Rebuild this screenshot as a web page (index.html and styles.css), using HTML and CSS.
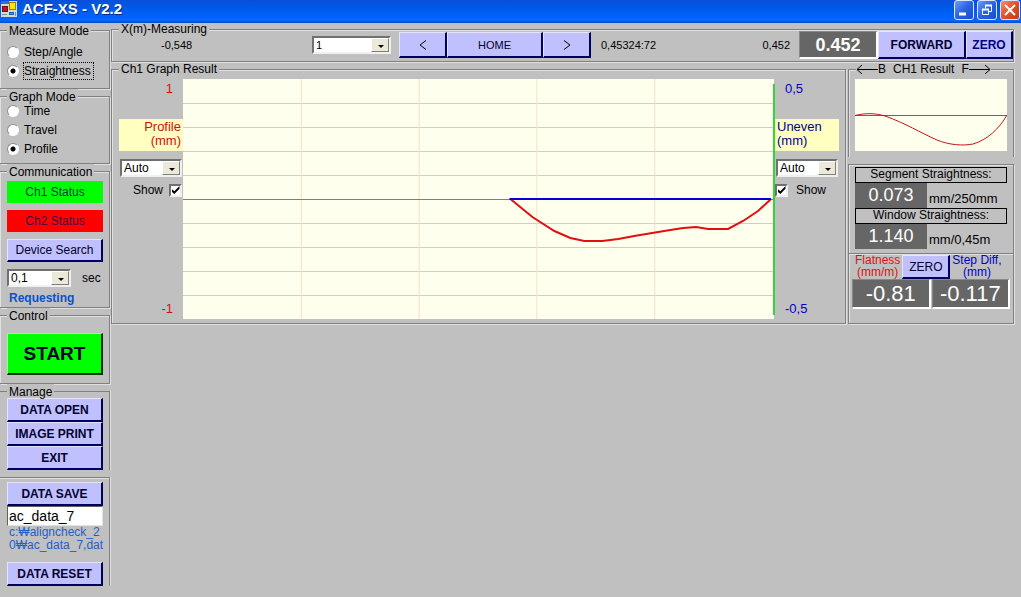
FILE: index.html
```html
<!DOCTYPE html>
<html lang="en">
<head>
<meta charset="utf-8">
<title>ACF-XS - V2.2</title>
<link rel="stylesheet" href="styles.css">
</head>
<body>
<header class="titlebar">
  <svg class="app-icon" width="16" height="16" viewBox="0 0 16 16" aria-hidden="true">
    <rect width="16" height="16" fill="#d8d8d0"/>
    <rect width="8" height="3" fill="#3a6ad0"/>
    <rect x="1.500" y="5.500" width="5" height="5" fill="#c01030" stroke="#701010"/>
    <rect x="8.500" y="1.500" width="6" height="7" fill="#ffe400" stroke="#a08000"/>
    <rect x="8.500" y="11.500" width="4" height="2" fill="#3aa0e8" stroke="#1060b0"/>
    <path d="M1 13.500h5M14.500 11v4" stroke="#8090a0"/>
  </svg>
  <h1 class="title">ACF-XS - V2.2</h1>
  <div class="window-buttons">
    <button class="win" aria-label="Minimize"><svg width="18" height="18" viewBox="0 0 18 18"><path d="M4 13h7" stroke="#fff" stroke-width="3"/></svg></button>
    <button class="win" aria-label="Restore"><svg width="18" height="18" viewBox="0 0 18 18" fill="none" stroke="#fff"><path d="M7.500 7V4.500h6v6H11"/><path d="M7 4.500h7" stroke-width="2"/><path d="M4.500 8.500h6v5h-6z"/><path d="M4 8.500h7" stroke-width="2"/></svg></button>
    <button class="win close" aria-label="Close"><svg width="18" height="18" viewBox="0 0 18 18"><path d="M4 4l10 10M14 4L4 14" stroke="#fff" stroke-width="2"/></svg></button>
  </div>
</header>
<div class="app">
  <aside class="sidebar">
    <fieldset class="group measure">
      <legend>Measure Mode</legend>
      <label class="option"><input type="radio" name="measure"><span>Step/Angle</span></label>
      <label class="option"><input type="radio" name="measure" checked><span class="focused">Straightness</span></label>
    </fieldset>
    <fieldset class="group graph-mode">
      <legend>Graph Mode</legend>
      <label class="option"><input type="radio" name="graph"><span>Time</span></label>
      <label class="option"><input type="radio" name="graph"><span>Travel</span></label>
      <label class="option"><input type="radio" name="graph" checked><span>Profile</span></label>
    </fieldset>
    <fieldset class="group comm">
      <legend>Communication</legend>
      <button class="status ok">Ch1 Status</button>
      <button class="status bad">Ch2 Status</button>
      <button class="btn">Device Search</button>
      <div class="interval">
        <span class="combo"><select id="interval"><option>0,1</option></select></span>
        <label for="interval">sec</label>
      </div>
      <p class="requesting">Requesting</p>
    </fieldset>
    <fieldset class="group control">
      <legend>Control</legend>
      <button class="btn start">START</button>
    </fieldset>
    <fieldset class="group manage">
      <legend>Manage</legend>
      <button class="btn bold">DATA OPEN</button>
      <button class="btn bold">IMAGE PRINT</button>
      <button class="btn bold">EXIT</button>
    </fieldset>
    <section class="group files">
      <button class="btn bold">DATA SAVE</button>
      <input class="filename" type="text" value="ac_data_7" aria-label="File name">
      <p class="path">c:₩aligncheck_2<br>0₩ac_data_7,dat</p>
      <button class="btn bold">DATA RESET</button>
    </section>
  </aside>
  <main class="main">
    <fieldset class="group measuring">
      <legend>X(m)-Measuring</legend>
      <div class="toolbar">
        <output class="offset">-0,548</output>
        <span class="combo step"><select aria-label="Axis"><option>1</option></select></span>
        <div class="nav">
          <button class="btn" aria-label="Previous"><svg width="8" height="10" viewBox="0 0 8 10"><path d="M7 0.500L1 5l6 4.500" fill="none" stroke="#000"/></svg></button>
          <button class="btn">HOME</button>
          <button class="btn" aria-label="Next"><svg width="8" height="10" viewBox="0 0 8 10"><path d="M1 0.500L7 5l-6 4.500" fill="none" stroke="#000"/></svg></button>
        </div>
        <output class="clock">0,45324:72</output>
        <output class="current">0,452</output>
        <output class="display bold raised position">0.452</output>
        <button class="btn bold forward">FORWARD</button>
        <button class="btn bold zero-top">ZERO</button>
      </div>
    </fieldset>
    <div class="panels">
      <fieldset class="group chart">
        <legend>Ch1 Graph Result</legend>
        <div class="chart-row">
          <div class="axis left">
            <span class="limit">1</span>
            <div class="unit">Profile<br>(mm)</div>
            <span class="combo"><select aria-label="Profile scale"><option>Auto</option></select></span>
            <label class="show">Show <input type="checkbox" checked></label>
            <span class="limit low">-1</span>
          </div>
          <svg class="plot" viewBox="0 0 593 240" preserveAspectRatio="none" role="img" aria-label="Profile and uneven graph">
            <rect width="592" height="240" fill="#ffffee"/>
            <path d="M0 24.500H592M0 48.500H592M0 72.500H592M0 96.500H592M0 144.500H592M0 168.500H592M0 192.500H592M0 216.500H592" stroke="#cfcfc4"/>
            <path d="M118.500 0V240M236.500 0V240M354.500 0V240M472.500 0V240" stroke="#f5dfc8"/>
            <path d="M0 120.500H592" stroke="#808078"/>
            <path d="M328 120L350 138L372 152L388 159L402 162L420 162L436 160L452 157L470 154L488 151L501 149L514 148L526 150L546 150L561 142L576 132L589 120" fill="none" stroke="#e01010" stroke-width="2"/>
            <path d="M327 120H589" stroke="#0000d8" stroke-width="2"/>
            <path d="M592 5V236" stroke="#30d830" stroke-width="2"/>
          </svg>
          <div class="axis right">
            <span class="limit">0,5</span>
            <div class="unit">Uneven<br>(mm)</div>
            <span class="combo"><select aria-label="Uneven scale"><option>Auto</option></select></span>
            <label class="show"><input type="checkbox" checked> Show</label>
            <span class="limit low">-0,5</span>
          </div>
        </div>
      </fieldset>
      <div class="results">
        <fieldset class="group preview">
          <legend>
            <svg width="22" height="10" viewBox="0 0 22 10"><path d="M22 5.500H1M6 1L1 5.500L6 10" fill="none" stroke="#000"/></svg><span>B</span><span class="name">CH1 Result</span><span>F</span><svg width="22" height="10" viewBox="0 0 22 10"><path d="M0 5.500H21M16 1L21 5.500L16 10" fill="none" stroke="#000"/></svg>
          </legend>
          <svg class="mini" viewBox="0 0 152 72" preserveAspectRatio="none" role="img" aria-label="CH1 result curve">
            <rect width="152" height="72" fill="#ffffee"/>
            <path d="M0 36.500H152" stroke="#686860"/>
            <path d="M0 36.500C10 34 20 34 30 37C50 44 66 54 82 61C94 66 108 67 118 65C132 61 144 50 152 36" fill="none" stroke="#c01818"/>
          </svg>
        </fieldset>
        <section class="group straightness">
          <div class="caption">Segment Straightness:</div>
          <div class="reading"><output class="display">0.073</output><span>mm/250mm</span></div>
          <div class="caption">Window Straightness:</div>
          <div class="reading"><output class="display">1.140</output><span>mm/0,45m</span></div>
        </section>
        <section class="group flatness">
          <div class="heads">
            <span class="red">Flatness<br>(mm/m)</span>
            <button class="btn">ZERO</button>
            <span class="blue">Step Diff,<br>(mm)</span>
          </div>
          <div class="values">
            <output class="display raised">-0.81</output>
            <output class="display raised">-0.117</output>
          </div>
        </section>
      </div>
    </div>
  </main>
</div>
</body>
</html>
```
FILE: styles.css
```css
* { box-sizing: border-box; }

body {
  margin: 0;
  min-height: 100vh;
  background: #c0c0c0;
  color: #000;
  font: 12px/14px "Liberation Sans", Arial, "Noto Sans CJK KR", sans-serif;
}

button, input, select { font: inherit; color: inherit; margin: 0; border-radius: 0; }
p { margin: 0; }
svg { display: block; flex: none; }

/* Title bar */
.titlebar {
  display: flex;
  height: 23px;
  padding-left: 1px;
  background: linear-gradient(#0a50d8, #0058e6 30%, #0060f8 65%, #0068ff 90%, #0048c8);
}
.app-icon { margin-top: 1px; }
.title {
  flex: 1;
  margin: 0 0 0 5px;
  color: #fff;
  font-size: 15px;
  line-height: 18px;
  text-shadow: 1px 1px 0 #0a2a80;
}
.window-buttons { display: flex; gap: 3px; padding-right: 1px; }
.win {
  width: 20px;
  height: 20px;
  padding: 0;
  border: 1px solid #dce8ff;
  border-radius: 3px;
  background: linear-gradient(135deg, #6f9cf4, #2a62e0 50%, #1a4ccc);
}
.close { background: linear-gradient(135deg, #f09070, #e0502a 50%, #c83810); }

/* Frames */
.app { display: flex; align-items: flex-start; }
.group {
  min-width: 0;
  margin: 0;
  padding: 0;
  border: 1px solid #808080;
  box-shadow: 1px 1px 0 #e0e0e0, inset 1px 1px 0 #e0e0e0;
}
legend {
  margin-left: 7px;
  padding: 2px 2px 0;
  background: #c0c0c0;
  line-height: 12px;
}

/* Buttons and fields */
.btn {
  padding: 0;
  border: solid;
  border-width: 1px 2px 2px 1px;
  border-color: #e4e4ff #000060 #000060 #e4e4ff;
  background: #c0c0ff;
  color: #000030;
  line-height: 14px;
  text-align: center;
}
.bold { font-weight: bold; }
.combo { position: relative; display: block; height: 18px; }
.combo select {
  display: block;
  width: 100%;
  height: 100%;
  padding: 0 20px 0 2px;
  border: 2px solid;
  border-color: #707070 #f0f0f0 #f0f0f0 #707070;
  background: #fff;
  appearance: none;
  line-height: 14px;
}
.combo::before {
  content: "";
  position: absolute;
  top: 2px;
  right: 2px;
  bottom: 2px;
  width: 16px;
  border: 1px solid;
  border-color: #fff #808078 #808078 #fff;
  background: #ece9d8;
  pointer-events: none;
}
.combo::after {
  content: "";
  position: absolute;
  top: 9px;
  right: 7px;
  border: solid transparent;
  border-width: 3px 3px 0;
  border-top-color: #000;
  pointer-events: none;
}
input[type="radio"] {
  width: 12px;
  height: 12px;
  border: 1px solid;
  border-color: #909090 #fff #fff #909090;
  border-radius: 50%;
  background: #fff;
  appearance: none;
}
input[type="radio"]:checked { background: radial-gradient(circle, #000 2px, #fff 3px); }
input[type="checkbox"] {
  display: grid;
  place-items: center;
  width: 13px;
  height: 13px;
  border: 2px solid;
  border-color: #707070 #f0f0f0 #f0f0f0 #707070;
  background: #fff;
  appearance: none;
}
input[type="checkbox"]:checked::before {
  content: "";
  width: 8px;
  height: 8px;
  background: #000;
  clip-path: polygon(0 35%, 35% 65%, 100% 0, 100% 35%, 35% 100%, 0 70%);
}
.display {
  background: #666;
  color: #fff;
  font-size: 18px;
  text-align: center;
}
.raised {
  border: solid;
  border-width: 1px 2px 2px 1px;
  border-color: #888 #fff #fff #888;
}

/* Sidebar */
.sidebar { flex: none; width: 110px; }
.sidebar .group { border-left: 0; padding: 0 6px 0 7px; }
.sidebar legend { margin-left: 0; }
.sidebar .btn, .status { display: block; width: 100%; }
.sidebar .measure { padding-top: 8px; padding-bottom: 10px; }
.option {
  display: flex;
  align-items: center;
  gap: 4px;
  height: 14px;
}
.option + .option { margin-top: 5px; }
.option span { border: 1px dotted transparent; padding: 1px 2px 1px 0; }
.option .focused { border-color: #000; }
.sidebar .graph-mode { padding-top: 1px; padding-bottom: 7px; }
.sidebar .comm { padding-top: 3px; padding-bottom: 2px; }
.status { height: 22px; margin-bottom: 7px; padding: 0; border: 0; }
.ok { background: #00ff00; color: #004040; }
.bad { background: #ff0000; color: #400040; }
.comm .btn { height: 23px; }
.interval { display: flex; align-items: center; margin-top: 7px; }
.interval .combo { width: 64px; margin-right: 11px; }
.requesting { margin-top: 4px; padding-left: 2px; color: #0a50d0; font-weight: bold; }
.sidebar .control { padding-top: 11px; padding-bottom: 8px; }
.sidebar .start {
  height: 42px;
  border-color: #90ff90 #003000 #003000 #90ff90;
  background: #00ff00;
  font-size: 19px;
  font-weight: bold;
}
.sidebar .manage { border-bottom: 0; box-shadow: 1px 0 0 #e0e0e0; }
.sidebar .manage .btn, .sidebar .files .btn { height: 24px; }
.sidebar .files {
  margin-top: 7px;
  padding-top: 4px;
  border-bottom: 0;
  box-shadow: 1px 0 0 #e0e0e0, inset 0 1px 0 #e0e0e0;
}
.filename {
  display: block;
  width: 100%;
  height: 20px;
  padding: 0 1px;
  border: 1px solid;
  border-color: #606060 #e0e0e0 #e0e0e0 #606060;
  background: #fff;
  font-size: 14px;
}
.path {
  margin-bottom: 10px;
  padding-left: 2px;
  color: #2060c8;
  line-height: 13px;
  white-space: nowrap;
}

/* Measuring toolbar */
.main { flex: 1; min-width: 0; padding: 0 7px 0 1px; }
.measuring legend { padding-top: 0; }
.toolbar {
  display: flex;
  align-items: center;
  height: 28px;
  margin: -4px 0 2px;
  font-size: 11px;
}
.offset { width: 200px; padding-left: 49px; }
.step { width: 79px; margin-right: 8px; }
.nav { display: grid; grid-template-columns: 48px 96px 48px; }
.nav .btn { display: grid; place-items: center; height: 26px; }
.clock { flex: 1; padding-left: 10px; }
.current { margin-right: 9px; }
.position { width: 79px; height: 28px; line-height: 26px; }
.toolbar .bold.btn { height: 28px; font-size: 12px; }
.forward { width: 88px; }
.btn.zero-top { width: 47px; color: #000080; }

/* Graph */
.panels { display: flex; gap: 2px; margin-top: 1px; }
.chart { flex: 1; }
.chart legend, .preview legend { padding-top: 0; }
.chart-row { display: flex; padding: 4px 6px 4px 7px; }
.plot { flex: 1; width: 0; height: 240px; }
.axis { display: flex; flex-direction: column; width: 64px; }
.axis .combo { width: 62px; margin: 8px 1px 6px; }
.limit { padding: 3px 10px 0; color: #0000c0; }
.unit {
  height: 32px;
  margin-top: 23px;
  padding: 1px 2px;
  background: #ffffc0;
  color: #000090;
}
.limit, .unit { font-size: 13px; }
.left { text-align: right; }
.left .limit, .left .unit { color: #d01010; }
.show { display: flex; align-items: center; gap: 6px; height: 14px; }
.left .show { justify-content: flex-end; padding-right: 1px; }
.right .show { gap: 8px; }
.low { margin-top: auto; padding-bottom: 3px; }

/* Results */
.results { display: flex; flex-direction: column; flex: none; width: 166px; }
.preview { padding: 4px 6px 6px; border-bottom: 0; box-shadow: 1px 0 0 #e0e0e0, inset 1px 1px 0 #e0e0e0; }
.preview legend { display: flex; align-items: center; margin-left: 1px; padding: 0; }
.preview .name { margin: 0 7px; }
.mini { width: 100%; height: 72px; }
.straightness { margin-top: 7px; padding: 2px 6px 4px; border-bottom: 0; }
.caption { height: 16px; border: 1px solid #000; line-height: 13px; text-align: center; }
.reading { display: flex; align-items: flex-end; gap: 2px; font-size: 13px; line-height: 18px; }
.reading .display { width: 72px; height: 25px; line-height: 24px; }
.flatness { flex: 1; padding: 0 3px; }
.heads {
  display: flex;
  align-items: flex-end;
  gap: 2px;
  padding-left: 3px;
  line-height: 12px;
  text-align: center;
}
.heads .btn { width: 48px; height: 24px; }
.heads span { padding-bottom: 1px; }
.red { color: #e01010; }
.blue { color: #0000d0; }
.values { display: flex; gap: 1px; }
.values .display { flex: 1; height: 30px; font-size: 22px; line-height: 28px; }
```
